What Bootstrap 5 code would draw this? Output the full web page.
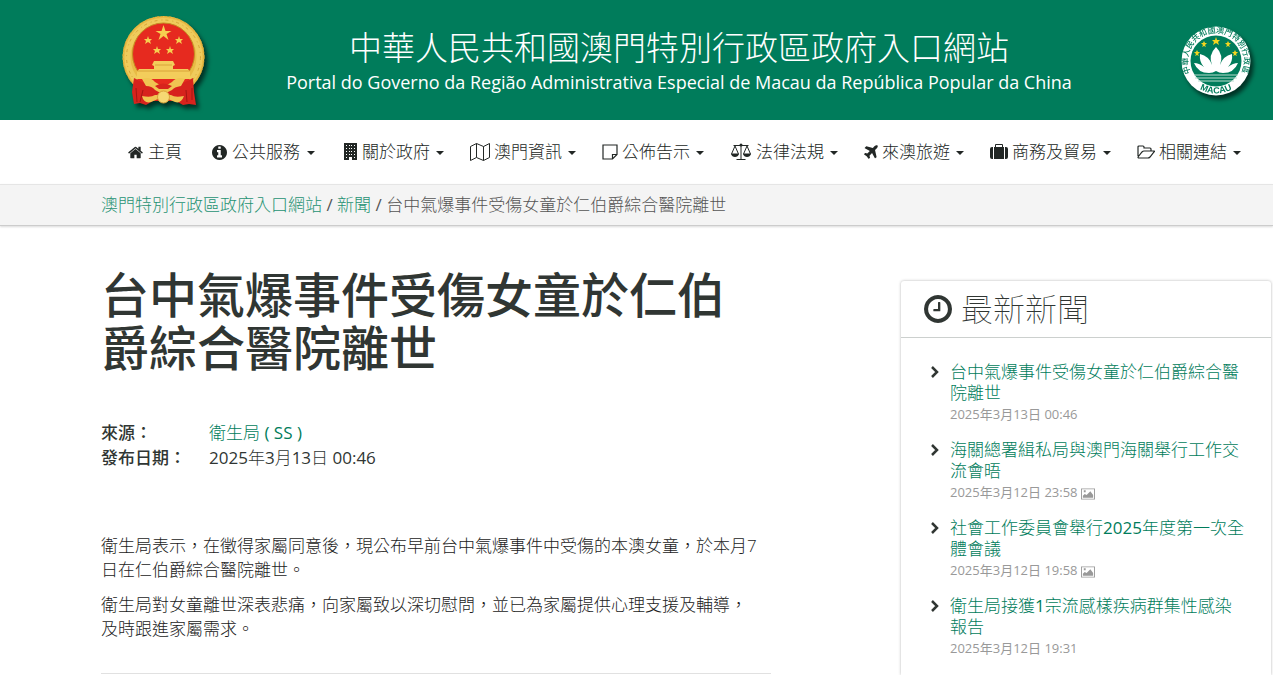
<!DOCTYPE html>
<html lang="zh-Hant">
<head>
<meta charset="utf-8">
<meta name="viewport" content="width=device-width, initial-scale=1">
<title>台中氣爆事件受傷女童於仁伯爵綜合醫院離世</title>
<link href="https://cdn.jsdelivr.net/npm/bootstrap@5.3.0/dist/css/bootstrap.min.css" rel="stylesheet">
<style>
:root { --gov-green: #007c5b; --ink: #303633; }
body { font-family: "Open Sans", "Noto Sans CJK TC", sans-serif; font-size: 17px; line-height: 24px; font-weight: 300; color: var(--ink); background: #fff; }
.latin-text { font-weight: 400; }
.gov-header { background: var(--gov-green); color: #fff; min-height: 120px; padding: 0 21px 0 118px; }
.gov-header svg { flex: none; filter: drop-shadow(3px 4px 2px rgba(0,0,0,.6)); }
.gov-names { padding: 4px 30px 0 0; }
.gov-zh { font-size: 33px; line-height: 40px; }
.gov-pt { font-size: 18px; line-height: 28px; font-weight: 400; }
.gov-nav { min-height: 64px; padding: 0 0 0 113px; }
.gov-nav .nav-link { color: #222725; padding: 20px 13px; white-space: nowrap; display: flex; align-items: center; gap: 4px; }
.gov-nav .nav-wide { padding: 20px 15px; gap: 5px; }
.gov-nav .dropdown-toggle::after { border-width: 4px 4px 0; margin: 2px 0 0 2px; }
.gov-nav svg, .card-heading svg, .thumb-icon { flex: none; fill: currentColor; }
.gov-crumb { background: #f4f4f4; border-top: 1px solid #e5e5e5; border-bottom: 1px solid #ccc; box-shadow: 0 1px 2px rgba(0,0,0,.15); padding: 8px 0 8px 101px; color: #555; }
a { color: var(--gov-green); text-decoration: none; }
.gov-crumb a { color: #269273; }
.page-wrap { padding: 0 2px 0 101px; }
.story { padding-right: 130px; padding-top: 42px; }
.story h1 { font-size: 48px; line-height: 53px; font-weight: 500; margin-bottom: 46px; }
.facts { margin-bottom: 64px; }
.facts dt { width: 108px; font-weight: 500; line-height: 25px; }
.facts dd { line-height: 25px; margin: 0; }
.story p { margin-bottom: 11px; color: #222; }
.story p .latin-text { font-weight: 300; }
.story hr { margin: 32px 0 0; border-color: #888; }
.latest { width: 370px; margin-top: 55px; border: 0; border-radius: 3px 3px 0 0; box-shadow: 0 0 3px rgba(0,0,0,.3); flex: none; color: var(--ink); }
.card-heading { font-size: 32px; line-height: 56px; font-weight: 100; padding: 0 23px; border-bottom: 1px solid #ccd0ce; gap: 9px; margin: 0; }
.latest ul { padding: 23px 24px 0 29px; margin: 0; }
.latest li { gap: 10px; margin-bottom: 14px; line-height: 21px; }
.latest li > svg { flex: none; margin-top: 5px; }
.latest a { display: block; margin-bottom: 1px; }
.latest .latin-text { display: inline-block; }
.latest time { font-size: 13px; font-weight: 400; color: #999; display: block; }
</style>
</head>
<body class="d-flex flex-column min-vh-100">
<header class="gov-header d-flex align-items-center">
  <svg width="90" height="96" viewBox="0 0 90 96" role="img" aria-label="國徽">
    <circle cx="45.500" cy="45" r="41" fill="#e8bb45"/>
    <circle cx="45.500" cy="45" r="36" fill="none" stroke="#efcb5c" stroke-width="6"/>
    <circle cx="45.500" cy="45" r="37" fill="none" stroke="#d6a536" stroke-width="1" stroke-dasharray="3 4 1 3"/>
    <circle cx="45.500" cy="45" r="40.500" fill="none" stroke="#d8a834" stroke-width="1" stroke-dasharray="2 2"/>
    <circle cx="45.500" cy="42" r="31" fill="#e62a1f" stroke="#c58a22"/>
    <g fill="#f6cf50">
      <path d="M0-8l2 6h6l-5 3 2 6-5-4-5 4 2-6-5-3h6z" transform="translate(45.500 21)"/>
      <path d="M0-4l1 3h3l-2 2 1 3-3-2-3 2 1-3-2-2h3z" transform="translate(30 28)"/>
      <path d="M0-4l1 3h3l-2 2 1 3-3-2-3 2 1-3-2-2h3z" transform="translate(61 28)"/>
      <path d="M0-4l1 3h3l-2 2 1 3-3-2-3 2 1-3-2-2h3z" transform="translate(39 38)"/>
      <path d="M0-4l1 3h3l-2 2 1 3-3-2-3 2 1-3-2-2h3z" transform="translate(52 38)"/>
    </g>
    <path d="M36 49h19l2 4-2 1v3h15l2 3v5l2 2H17l2-2v-5l2-3h15v-3l-2-1z" fill="#f3cd5b"/>
    <path d="M20 59h51M37 53h17" stroke="#d9a43b"/>
    <path d="M19 67h53l-6 8H25z" fill="#e62a1f"/>
    <path d="M16 66l8 4 9 5h25l9-5 8-4 1 14 2 13-7-1-6 1-7-4H35l-7 4-6-2-6 1-2-12z" fill="#d7231d"/>
    <path d="M18 76l1 14m6-12l-3 12m46-12l1 12m5-14v12" stroke="#a31613" stroke-width="1"/>
    <path d="M24 67q8-3 13 3l5 3h7l5-3q5-6 13-3l-4 7q-7 1-9 4-9 6-17 0-3-4-9-4z" fill="#f0c552"/>
    <path d="M37 74q8-5 17 0l-4 3h-9z" fill="#d7231d"/>
    <path d="M24 84q9 2 13-1h16q4 3 13 1-3 8-9 6l-7-3-5 3-5-3-7 3q-7 2-9-6z" fill="#f0c552"/>
    <circle cx="45.500" cy="85" r="6" fill="#f6d873" stroke="#d9a43b"/>
  </svg>
  <div class="gov-names flex-grow-1 text-center">
    <div class="gov-zh">中華人民共和國澳門特別行政區政府入口網站</div>
    <div class="gov-pt">Portal do Governo da Região Administrativa Especial de Macau da República Popular da China</div>
  </div>
  <svg width="72" height="72" viewBox="0 0 72 72" role="img" aria-label="澳門特別行政區區徽">
    <circle cx="36" cy="37" r="34.500" fill="#fff"/>
    <circle cx="36" cy="37" r="25.500" fill="#007c5b"/>
    <defs><path id="ringTop" d="M10.700 49A28 28 0 1 1 61.300 49"/><path id="ringBottom" d="M13 60A33 33 0 0 0 59 60"/></defs>
    <g fill="#007c5b" font-weight="500"><text font-size="8" font-family="Noto Sans CJK TC, sans-serif"><textPath href="#ringTop">中華人民共和國澳門特別行政區</textPath></text>
    <text font-size="9" font-family="Liberation Sans, sans-serif" font-weight="700" text-anchor="middle"><textPath href="#ringBottom" startOffset="50%">MACAU</textPath></text></g>
    <g fill="#f5d51e">
      <path d="M0-4l1 3h3l-2 2 1 3-3-2-3 2 1-3-2-2h3z" transform="translate(36 17)"/>
      <path d="M0-3l1 2h2l-2 2 1 2-2-1-2 1 1-2-2-2h2z" transform="translate(24 20)"/>
      <path d="M0-3l1 2h2l-2 2 1 2-2-1-2 1 1-2-2-2h2z" transform="translate(48 20)"/>
      <path d="M0-3l1 2h2l-2 2 1 2-2-1-2 1 1-2-2-2h2z" transform="translate(17 29)"/>
      <path d="M0-3l1 2h2l-2 2 1 2-2-1-2 1 1-2-2-2h2z" transform="translate(55 29)"/>
    </g>
    <path d="M36 23q8 8 4 18 3-9 12-11 1 8-4 13 5-4 10-4-4 10-15 10-4 0-7-2-3 2-7 2-11 0-15-10 5 0 10 4-5-5-4-13 9 2 12 11-4-10 4-18z" fill="#fff"/>
    <path d="M14 51h44M15 54h42M18 57h36" stroke="#b9dccf" stroke-width="1"/>
  </svg>
</header>
<nav class="gov-nav d-flex align-items-center" aria-label="主選單">
  <ul class="nav flex-nowrap">
    <li class="nav-item"><a class="nav-link nav-wide" href="#"><svg width="15" height="15" viewBox="64 128 1664 1536"><path d="M1472 992v480q0 26-19 45t-45 19h-384v-384h-256v384h-384q-26 0-45-19t-19-45v-480q0-1 .5-3t.5-3l575-474 575 474q1 2 1 6zm223-69l-62 74q-8 9-21 11h-3q-13 0-21-7l-692-577-692 577q-12 8-24 7-13-2-21-11l-62-74q-8-10-7-23.500t11-21.500l719-599q32-26 76-26t76 26l244 204v-195q0-14 9-23t23-9h192q14 0 23 9t9 23v408l219 182q10 8 11 21.500t-7 23.500z"/></svg>主頁</a></li>
    <li class="nav-item"><a class="nav-link nav-wide dropdown-toggle" href="#"><svg width="15" height="15" viewBox="128 128 1536 1536"><path d="M1152 1376v-160q0-14-9-23t-23-9h-96v-512q0-14-9-23t-23-9h-320q-14 0-23 9t-9 23v160q0 14 9 23t23 9h96v320h-96q-14 0-23 9t-9 23v160q0 14 9 23t23 9h448q14 0 23-9t9-23zm-128-896v-160q0-14-9-23t-23-9h-192q-14 0-23 9t-9 23v160q0 14 9 23t23 9h192q14 0 23-9t9-23zm640 416q0 209-103 385.500t-279.500 279.500-385.500 103-385.500-103-279.500-279.500-103-385.500 103-385.500 279.500-279.500 385.500-103 385.500 103 279.500 279.500 103 385.500z"/></svg>公共服務</a></li>
    <li class="nav-item"><a class="nav-link dropdown-toggle" href="#"><svg width="15" height="18" viewBox="0 0 15 18"><path fill-rule="evenodd" d="M1 0h13v17H9v-3H6v3H1zM3 2v1h1V2zm3 0v1h1V2zm2 0v1h1V2zm3 0v1h1V2zM3 5v1h1V5zm3 0v1h1V5zm2 0v1h1V5zm3 0v1h1V5zM3 8v1h1V8zm3 0v1h1V8zm2 0v1h1V8zm3 0v1h1V8zM3 11v1h1v-1zm3 0v1h1v-1zm2 0v1h1v-1zm3 0v1h1v-1zM3 14v1h1v-1zm8 0v1h1v-1z"/></svg>關於政府</a></li>
    <li class="nav-item"><a class="nav-link dropdown-toggle" href="#"><svg width="20" height="18" viewBox="0 0 20 18"><path d="M.5 3.500l6-3 7 3 6-3v14l-6 3-7-3-6 3zM6.500.500v14m7-11v14" fill="none" stroke="currentColor"/></svg>澳門資訊</a></li>
    <li class="nav-item"><a class="nav-link dropdown-toggle" href="#"><svg width="16" height="16" viewBox="0 0 16 16"><path d="M1 1h14v9.500L10.500 15H1zM10.500 15v-4.500H15" fill="none" stroke="currentColor" stroke-width="1.200"/></svg>公佈告示</a></li>
    <li class="nav-item"><a class="nav-link dropdown-toggle" href="#"><svg width="22" height="18" viewBox="0 0 21 18"><g fill="none" stroke="currentColor"><path d="M3 2.500h15M10.500 1v15M6 16.500h9M4.500 3l-3.500 8h7zM16.500 3L13 11h7z"/></g><path d="M.5 11h8q-1 3-4 3t-4-3zm12 0h8q-1 3-4 3t-4-3z"/><circle cx="10.500" cy="2" r="1.500"/></svg>法律法規</a></li>
    <li class="nav-item"><a class="nav-link dropdown-toggle" href="#"><svg width="14" height="14" viewBox="190 120 1420 1430"><path d="M1568 160q44 52 12 148t-108 172l-161 161 160 696q5 19-12 33l-128 96q-7 6-19 6-4 0-7-1-15-3-21-16l-279-508-259 259 53 194q5 17-8 31l-96 96q-9 9-23 9h-2q-15-2-24-13l-189-252-252-189q-11-7-13-23-1-13 9-25l96-97q9-9 23-9 6 0 8 1l194 53 259-259-508-279q-14-8-17-24-2-16 9-27l128-128q14-13 30-8l665 159 160-160q76-76 172-108t148 12z"/></svg>來澳旅遊</a></li>
    <li class="nav-item"><a class="nav-link dropdown-toggle" href="#"><svg width="18" height="16" viewBox="0 0 18 16"><path d="M3 3v12H2q-2 0-2-2V5q0-2 2-2zm12 0h1q2 0 2 2v8q0 2-2 2h-1zM4 3h1V1q0-1 1-1h6q1 0 1 1v2h1v12H4zm2 0h6V1H6z"/></svg>商務及貿易</a></li>
    <li class="nav-item"><a class="nav-link dropdown-toggle" href="#"><svg width="18" height="14" viewBox="0 0 18 14"><path d="M1 11V2q0-1 1-1h4q1 0 1 1v1h6q1 0 1 1v2M1 12l4-5q1-1 2-1h10q1 0 0 1l-4 5q-1 1-2 1H2q-1 0-1-1z" fill="none" stroke="currentColor" stroke-width="1.200"/></svg>相關連結</a></li>
  </ul>
</nav>
<nav class="gov-crumb" aria-label="路徑"><a href="#">澳門特別行政區政府入口網站</a> <span class="latin-text">/</span> <a href="#">新聞</a> <span class="latin-text">/</span> 台中氣爆事件受傷女童於仁伯爵綜合醫院離世</nav>
<div class="page-wrap d-flex flex-grow-1">
  <main class="story flex-grow-1">
    <h1>台中氣爆事件受傷女童於仁伯爵綜合醫院離世</h1>
    <dl class="facts">
      <div class="d-flex"><dt>來源：</dt><dd><a href="#">衛生局<span class="latin-text"> ( SS )</span></a></dd></div>
      <div class="d-flex"><dt>發布日期：</dt><dd><span class="latin-text">2025</span>年<span class="latin-text">3</span>月<span class="latin-text">13</span>日<span class="latin-text"> 00:46</span></dd></div>
    </dl>
    <p>衛生局表示，在徵得家屬同意後，現公布早前台中氣爆事件中受傷的本澳女童，於本月<span class="latin-text">7</span><br>日在仁伯爵綜合醫院離世。</p>
    <p>衛生局對女童離世深表悲痛，向家屬致以深切慰問，並已為家屬提供心理支援及輔導，<br>及時跟進家屬需求。</p>
    <hr>
  </main>
  <aside class="latest card">
    <h2 class="card-heading d-flex align-items-center"><svg width="28" height="28" viewBox="128 128 1536 1536"><path d="M1024 544v448q0 14-9 23t-23 9h-320q-14 0-23-9t-9-23v-64q0-14 9-23t23-9h224v-352q0-14 9-23t23-9h64q14 0 23 9t9 23zm416 352q0-148-73-273t-198-198-273-73-273 73-198 198-73 273 73 273 198 198 273 73 273-73 198-198 73-273zm224 0q0 209-103 385.500t-279.500 279.500-385.500 103-385.500-103-279.500-279.500-103-385.500 103-385.500 279.500-279.500 385.500-103 385.500 103 279.500 279.500 103 385.500z"/></svg>最新新聞</h2>
    <ul class="list-unstyled">
      <li class="d-flex"><svg width="10" height="12" viewBox="0 0 10 12"><path d="M2 1l5 5-5 5" fill="none" stroke="currentColor" stroke-width="2.500"/></svg><div><a href="#">台中氣爆事件受傷女童於仁伯爵綜合醫院離世</a><time>2025年3月13日 00:46</time></div></li>
      <li class="d-flex"><svg width="10" height="12" viewBox="0 0 10 12"><path d="M2 1l5 5-5 5" fill="none" stroke="currentColor" stroke-width="2.500"/></svg><div><a href="#">海關總署緝私局與澳門海關舉行工作交流會晤</a><time>2025年3月12日 23:58 <svg class="thumb-icon" width="14" height="12" viewBox="0 0 15 12"><path fill-rule="evenodd" d="M0 0h15v12H0zm1 1v10h13V1zm1 9V8l2-2 2 1 4-4 3 4v3zM3 2h2v2H3z"/></svg></time></div></li>
      <li class="d-flex"><svg width="10" height="12" viewBox="0 0 10 12"><path d="M2 1l5 5-5 5" fill="none" stroke="currentColor" stroke-width="2.500"/></svg><div><a href="#">社會工作委員會舉行<span class="latin-text">2025</span>年度第一次全體會議</a><time>2025年3月12日 19:58 <svg class="thumb-icon" width="14" height="12" viewBox="0 0 15 12"><path fill-rule="evenodd" d="M0 0h15v12H0zm1 1v10h13V1zm1 9V8l2-2 2 1 4-4 3 4v3zM3 2h2v2H3z"/></svg></time></div></li>
      <li class="d-flex"><svg width="10" height="12" viewBox="0 0 10 12"><path d="M2 1l5 5-5 5" fill="none" stroke="currentColor" stroke-width="2.500"/></svg><div><a href="#">衛生局接獲<span class="latin-text">1</span>宗流感樣疾病群集性感染報告</a><time>2025年3月12日 19:31</time></div></li>
    </ul>
  </aside>
</div>
<script src="https://cdn.jsdelivr.net/npm/bootstrap@5.3.0/dist/js/bootstrap.bundle.min.js"></script>
</body>
</html>
